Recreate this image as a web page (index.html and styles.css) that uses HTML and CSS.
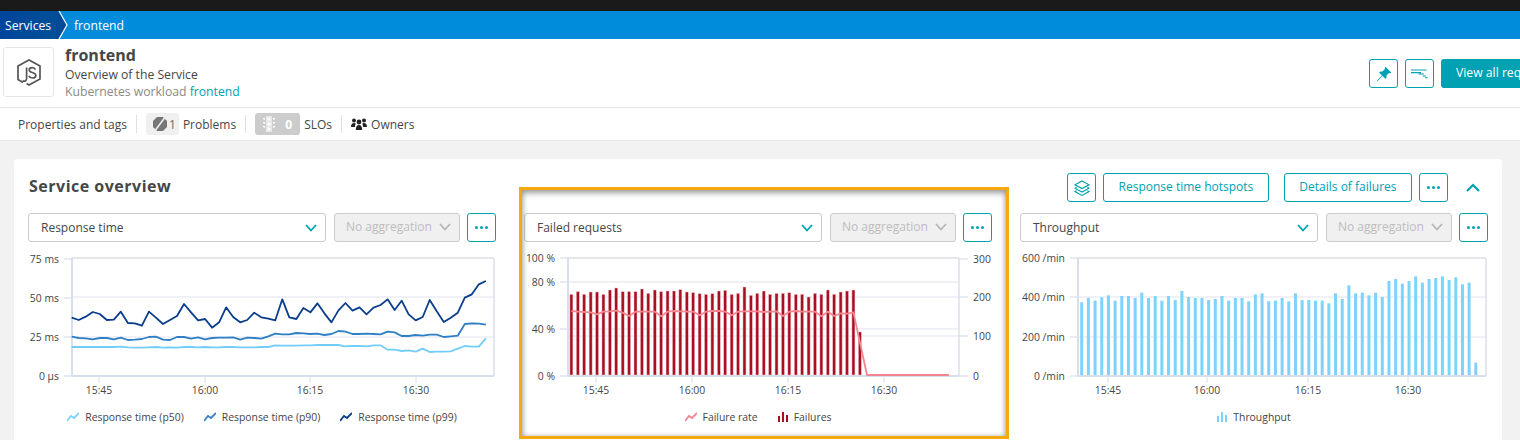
FILE: index.html
```html
<!DOCTYPE html>
<html lang="en">
<head>
    <meta charset="UTF-8">
    <meta name="viewport" content="width=device-width, initial-scale=1.0">
    <title>frontend - Overview of the Service</title>
    <link rel="stylesheet" href="styles.css">
</head>
<body>
    <div class="topbar"></div>
    <div class="breadcrumb">
        <a class="crumb-root">Services</a>
        <svg class="crumb-arrow" width="13" height="28" viewBox="0 0 13 28"><path d="M0 0H3L11 14L3 28H0Z" fill="#004a97"/><path d="M3 0L11 14L3 28" fill="none" stroke="#fff" stroke-width="1.2"/></svg>
        <a class="crumb-item">frontend</a>
    </div>

    <div class="header">
        <div class="tech-icon">
            <svg width="24" height="27" viewBox="0 0 24 27" fill="none" stroke="#555" stroke-width="1.7"><path d="M6 23.4L1 20.4V7L12 1L23 7V20L12 26L9.6 24.6"/><path d="M9.6 8.5V19.6C9.6 21.8 7.6 22.8 5.6 21.8"/><path d="M18.4 10.6C17.8 9.2 16.6 8.6 15.2 8.6C13.4 8.6 12.2 9.6 12.2 11C12.2 14.2 18.8 12.8 18.8 16.4C18.8 18 17.4 19 15.4 19C13.6 19 12.4 18.2 11.8 16.8"/></svg>
        </div>
        <div class="header-info">
            <h1>frontend</h1>
            <div class="header-sub">Overview of the Service</div>
            <div class="header-meta">Kubernetes workload <a>frontend</a></div>
        </div>
        <div class="header-actions">
            <div class="icon-button">
                <svg width="16" height="16" viewBox="0 0 16 16" fill="#00a1b2"><path d="M9.6 0.8L15.2 6.4L14 7.4L13 7L10.4 9.6C10.8 11 10.4 12.2 9.6 13L6.6 10L1 15.4L0.6 15L6 9.4L3 6.4C3.8 5.6 5 5.2 6.4 5.6L9 3L8.6 2Z"/></svg>
            </div>
            <div class="icon-button">
                <svg width="17" height="10" viewBox="0 0 17 10" fill="#00a1b2"><path d="M0 0.6H15.6V1.6H0ZM0 3H10V4.2H0ZM7.6 4.6H13V5.6H7.6ZM11.6 6.4H15V7.4H11.6ZM14 8.2H16.6V9.2H14Z"/></svg>
            </div>
            <div class="primary-button">View all requests</div>
        </div>
    </div>

    <div class="props">
        <span class="props-item">Properties and tags</span>
        <span class="props-sep"></span>
        <span class="chip chip-problems">
            <svg width="14" height="14" viewBox="0 0 14 14"><path d="M4 0H10L14 4V10L10 14H4L0 10V4Z" fill="#777"/><path d="M11.5 1L2.5 13" stroke="#f0f0f0" stroke-width="1.6"/></svg>
            <span>1</span>
        </span>
        <span class="props-item">Problems</span>
        <span class="props-sep"></span>
        <span class="chip chip-slo">
            <svg width="14" height="16" viewBox="0 0 14 16" fill="#fff"><path d="M4 0H10V16H4Z" opacity=".55"/><path d="M1 2H3V4L1 3ZM11 2H13V3L11 4ZM1 6H3V8L1 7ZM11 6H13V7L11 8ZM1 10H3V12L1 11ZM11 10H13V11L11 12Z"/><circle cx="7" cy="3" r="1.6"/><circle cx="7" cy="8" r="1.6"/><circle cx="7" cy="13" r="1.6"/></svg>
            <span>0</span>
        </span>
        <span class="props-item">SLOs</span>
        <span class="props-sep"></span>
        <svg class="owners-icon" width="16" height="12" viewBox="0 0 16 12" fill="#222"><circle cx="3" cy="2.6" r="2"/><circle cx="13" cy="2.6" r="2"/><circle cx="8" cy="4" r="2.4"/><path d="M0 9C0 6.5 1.2 5 3 5C3.8 5 4.4 5.3 4.8 5.8C4.2 6.6 4 7.6 4 9ZM16 9C16 6.5 14.8 5 13 5C12.2 5 11.6 5.3 11.2 5.8C11.8 6.6 12 7.6 12 9ZM4.8 12C4.8 8.6 6 7 8 7C10 7 11.2 8.6 11.2 12Z"/></svg>
        <span class="props-item">Owners</span>
    </div>

    <div class="card">
        <div class="card-head">
            <h2>Service overview</h2>
            <div class="card-actions">
                <div class="icon-button">
                    <svg width="16" height="16" viewBox="0 0 16 16" fill="none" stroke="#00a1b2" stroke-width="1.1"><path d="M8 1L15 4.8L8 8.6L1 4.8Z"/><path d="M2.6 7.2L1 8.2L8 12L15 8.2L13.4 7.2"/><path d="M2.6 10.6L1 11.6L8 15.4L15 11.6L13.4 10.6"/></svg>
                </div>
                <div class="text-button">Response time hotspots</div>
                <div class="text-button details-button">Details of failures</div>
                <div class="icon-button"><span class="dots"><i></i><i></i><i></i></span></div>
                <svg class="collapse" width="14" height="9" viewBox="0 0 14 9" fill="none" stroke="#00a1b2" stroke-width="2.2"><path d="M1 8L7 2L13 8"/></svg>
            </div>
        </div>

        <div class="columns">
            <div class="column">
                <div class="controls">
                    <div class="select"><span>Response time</span><svg class="caret" width="12" height="8" viewBox="0 0 12 8" fill="none" stroke="#00a1b2" stroke-width="1.8"><path d="M1 1L6 6.5L11 1"/></svg></div>
                    <div class="select select-off"><span>No aggregation</span><svg class="caret" width="12" height="8" viewBox="0 0 12 8" fill="none" stroke="#b4b4b4" stroke-width="1.6"><path d="M1 1L6 6.5L11 1"/></svg></div>
                    <div class="icon-button"><span class="dots"><i></i><i></i><i></i></span></div>
                </div>
                <svg class="chart" id="chartResponse" viewBox="28 250 468 150"></svg>
                <div class="legend">
                    <span class="legend-item"><svg width="12" height="10" viewBox="0 0 12 10" fill="none" stroke="#7dd3fc" stroke-width="1.8"><path d="M0 9L4 4L7 6L12 1"/></svg>Response time (p50)</span>
                    <span class="legend-item"><svg width="12" height="10" viewBox="0 0 12 10" fill="none" stroke="#3b82c4" stroke-width="1.8"><path d="M0 9L4 4L7 6L12 1"/></svg>Response time (p90)</span>
                    <span class="legend-item"><svg width="12" height="10" viewBox="0 0 12 10" fill="none" stroke="#0a3d8a" stroke-width="1.8"><path d="M0 9L4 4L7 6L12 1"/></svg>Response time (p99)</span>
                </div>
            </div>

            <div class="column">
                <div class="controls">
                    <div class="select"><span>Failed requests</span><svg class="caret" width="12" height="8" viewBox="0 0 12 8" fill="none" stroke="#00a1b2" stroke-width="1.8"><path d="M1 1L6 6.5L11 1"/></svg></div>
                    <div class="select select-off"><span>No aggregation</span><svg class="caret" width="12" height="8" viewBox="0 0 12 8" fill="none" stroke="#b4b4b4" stroke-width="1.6"><path d="M1 1L6 6.5L11 1"/></svg></div>
                    <div class="icon-button"><span class="dots"><i></i><i></i><i></i></span></div>
                </div>
                <svg class="chart" id="chartFailed" viewBox="524 250 468 150"></svg>
                <div class="legend">
                    <span class="legend-item"><svg width="12" height="10" viewBox="0 0 12 10" fill="none" stroke="#f5868f" stroke-width="1.8"><path d="M0 9L4 4L7 6L12 1"/></svg>Failure rate</span>
                    <span class="legend-item"><svg width="10" height="10" viewBox="0 0 10 10" fill="#a80f22"><path d="M0 4H2V10H0ZM4 0H6V10H4ZM8 3H10V10H8Z"/></svg>Failures</span>
                </div>
                <div class="highlight"></div>
            </div>

            <div class="column">
                <div class="controls">
                    <div class="select"><span>Throughput</span><svg class="caret" width="12" height="8" viewBox="0 0 12 8" fill="none" stroke="#00a1b2" stroke-width="1.8"><path d="M1 1L6 6.5L11 1"/></svg></div>
                    <div class="select select-off"><span>No aggregation</span><svg class="caret" width="12" height="8" viewBox="0 0 12 8" fill="none" stroke="#b4b4b4" stroke-width="1.6"><path d="M1 1L6 6.5L11 1"/></svg></div>
                    <div class="icon-button"><span class="dots"><i></i><i></i><i></i></span></div>
                </div>
                <svg class="chart" id="chartThroughput" viewBox="1020 250 468 150"></svg>
                <div class="legend">
                    <span class="legend-item"><svg width="10" height="10" viewBox="0 0 10 10" fill="#7dd3fc"><path d="M0 4H2V10H0ZM4 0H6V10H4ZM8 3H10V10H8Z"/></svg>Throughput</span>
                </div>
            </div>
        </div>
    </div>

    <script src="charts.js"></script>
</body>
</html>
```

FILE: styles.css
```css
* {
    box-sizing: border-box;
}
html, body {
    height: 440px;
    overflow: hidden;
}
body {
    margin: 0;
    background-color: #f2f2f2;
    color: #454646;
    font-family: "Open Sans", "Noto Sans", sans-serif;
    font-size: 12.2px;
}
.topbar {
    height: 11px;
    background-color: #1a1a1a;
}
.breadcrumb {
    display: flex;
    align-items: center;
    height: 28px;
    background-color: #008cdb;
    color: #fff;
}
.crumb-root {
    display: flex;
    align-items: center;
    height: 28px;
    width: 56px;
    padding-left: 5px;
    background: linear-gradient(90deg, #00459b, #004f98);
}
.crumb-arrow {
    display: block;
}
.crumb-item {
    margin-left: 5px;
}
.header {
    display: flex;
    align-items: flex-start;
    height: 69px;
    padding: 8px 0 0 3px;
    background-color: #fff;
    border-bottom: 1px solid #e6e6e6;
}
.tech-icon {
    display: flex;
    align-items: center;
    justify-content: center;
    flex: none;
    width: 51px;
    height: 50px;
    border: 1px solid #e6e6e6;
    border-radius: 3px;
}
.header-info {
    margin-left: 11px;
    flex: 1;
}
.header-info h1 {
    margin: -2px 0 0;
    font-size: 16px;
    line-height: 21px;
    font-weight: 700;
}
.header-sub {
    line-height: 17px;
}
.header-meta {
    line-height: 17px;
    color: #898989;
}
.header-meta a {
    color: #00a1b2;
}
.header-actions {
    display: flex;
    gap: 7px;
    flex: none;
    margin: 12px -50px 0 0;
}
.icon-button {
    display: flex;
    align-items: center;
    justify-content: center;
    flex: none;
    width: 29px;
    height: 29px;
    background-color: #fff;
    border: 1px solid #00a1b2;
    border-radius: 3px;
}
.primary-button {
    width: 129px;
    height: 29px;
    padding-left: 15px;
    line-height: 27px;
    color: #fff;
    background-color: #00a1b2;
    border-radius: 3px;
    white-space: nowrap;
}
.props {
    display: flex;
    align-items: center;
    height: 33px;
    padding-left: 18px;
    font-size: 12px;
    background-color: #fff;
    border-bottom: 1px solid #e6e6e6;
}
.props-sep {
    width: 1px;
    height: 18px;
    margin: 0 9px;
    background-color: #e0e0e0;
}
.chip {
    display: flex;
    align-items: center;
    height: 22px;
    margin-right: 4px;
    border-radius: 3px;
}
.chip-problems {
    width: 33px;
    padding-left: 7px;
    gap: 2px;
    background-color: #f0f0f0;
    color: #6b6b6b;
}
.chip-slo {
    width: 45px;
    padding-left: 7px;
    background-color: #cccccc;
    color: #fff;
    font-weight: 700;
}
.chip-slo span {
    margin-left: 9px;
}
.owners-icon {
    margin: 0 4px 0 0;
}
.card {
    margin: 18px 18px 0 14px;
    height: 320px;
    padding: 14px 14px 0;
    background-color: #fff;
    border-radius: 3px;
}
.card-head {
    display: flex;
    align-items: center;
    justify-content: space-between;
    height: 29px;
}
.card-head h2 {
    margin: -4px 0 0 1px;
    font-size: 16px;
    font-weight: 700;
    letter-spacing: 0.5px;
}
.card-actions {
    display: flex;
    align-items: center;
    gap: 7px;
    margin-right: 8px;
}
.text-button {
    height: 29px;
    padding: 0 14.5px;
    font-size: 12px;
    line-height: 26px;
    color: #00a1b2;
    background-color: #fff;
    border: 1px solid #00a1b2;
    border-radius: 3px;
}
.details-button {
    margin-left: 8px;
}
.collapse {
    margin: 0 0 0 11px;
}
.dots {
    display: flex;
    gap: 2px;
}
.dots i {
    width: 3px;
    height: 3px;
    border-radius: 50%;
    background-color: #00a1b2;
}
.columns {
    display: grid;
    grid-template-columns: repeat(3, 468px);
    gap: 28px;
    margin-top: 11px;
}
.column {
    position: relative;
}
.controls {
    display: flex;
    gap: 8px;
}
.controls .icon-button {
    margin-left: -1px;
}
.select {
    display: flex;
    align-items: center;
    justify-content: space-between;
    flex: none;
    width: 298px;
    height: 29px;
    padding: 0 8px 0 12px;
    font-size: 12px;
    background-color: #fff;
    border: 1px solid #cccccc;
    border-radius: 3px;
}
.select-off {
    width: 126px;
    padding: 0 8px 2px 11px;
    color: #bdbdbd;
    background-color: #f0f0f0;
}
.chart {
    display: block;
    width: 468px;
    height: 150px;
    margin-top: 8px;
}
.chart text {
    font-size: 10.4px;
    fill: #454646;
}
.legend {
    display: flex;
    justify-content: center;
    gap: 20px;
    margin-top: 10px;
    font-size: 10.4px;
    line-height: 14px;
}
.legend-item {
    display: flex;
    align-items: center;
    gap: 6px;
}
.highlight {
    position: absolute;
    top: -26px;
    left: -5px;
    width: 490px;
    height: 252px;
    border: 3px solid #f5a80f;
    box-shadow: inset 0 3px 6px rgba(0, 0, 0, 0.35), inset 0 0 5px rgba(0, 0, 0, 0.2);
    pointer-events: none;
}
```

FILE: charts.js
```js
// draws the three service overview charts
let svgNs = 'http://www.w3.org/2000/svg';

function el(parent, name, attrs, text) {
    let node = document.createElementNS(svgNs, name);
    for (let key in attrs) {
        node.setAttribute(key, attrs[key]);
    }
    if (text) node.textContent = text;
    parent.appendChild(node);
    return node;
}

function frame(svg, box, grid, leftLabels, ticks) {
    let axis = '#d8deec';
    let line = '#ebedf3';
    grid.forEach(function (y) {
        el(svg, 'line', { x1: box.left, x2: box.right, y1: y, y2: y, stroke: line, 'stroke-width': 1.4 });
    });
    el(svg, 'line', { x1: box.left, x2: box.right, y1: box.top, y2: box.top, stroke: '#e4e6ec', 'stroke-width': 1.8 });
    el(svg, 'line', { x1: box.right, x2: box.right, y1: box.top, y2: box.bottom, stroke: '#e2e5ee', 'stroke-width': 1.8 });
    el(svg, 'line', { x1: box.left, x2: box.left, y1: box.top, y2: box.bottom, stroke: axis, 'stroke-width': 2 });
    el(svg, 'line', { x1: box.left, x2: box.right, y1: box.bottom, y2: box.bottom, stroke: axis, 'stroke-width': 2 });
    leftLabels.forEach(function (label) {
        el(svg, 'line', { x1: box.left - 8, x2: box.left, y1: label[1], y2: label[1], stroke: axis, 'stroke-width': 1.2 });
        el(svg, 'text', { x: box.left - 13, y: label[1] + 3.5, 'text-anchor': 'end' }, label[0]);
    });
    ticks.forEach(function (tick) {
        el(svg, 'line', { x1: tick[1], x2: tick[1], y1: box.bottom, y2: box.bottom + 7, stroke: axis, 'stroke-width': 1 });
        el(svg, 'text', { x: tick[1], y: box.bottom + 18, 'text-anchor': 'middle' }, tick[0]);
    });
}

function polyline(svg, points, color, width) {
    let attr = points.map(function (p) { return p[0] + ',' + p[1]; }).join(' ');
    el(svg, 'polyline', { points: attr, fill: 'none', stroke: color, 'stroke-width': width, 'stroke-linejoin': 'round' });
}

// series values were read off at 3x, so a value of v is offset + v / 3 on the page
function series(values, startX, stepX, offset) {
    return values.map(function (v, i) { return [startX + i * stepX, offset + v / 3]; });
}

// Response time
let p99 = [143,150,140,126,132,150,149,125,159,160,167,125,143,162,150,138,102,127,151,147,173,157,112,141,157,150,128,142,146,151,88,142,147,114,127,100,130,157,121,99,122,112,133,113,105,88,120,92,133,151,141,90,124,156,143,128,83,73,43,33];
let p90 = [200,204,205,208,204,204,208,203,210,209,207,201,200,209,210,201,201,206,202,208,204,203,203,202,209,203,204,206,199,191,193,193,189,190,192,191,195,192,183,185,192,192,191,192,193,185,187,198,198,195,197,194,194,201,199,197,162,160,161,164];
let p50 = [231,231,231,231,231,231,231,230,232,233,233,232,231,233,232,233,231,231,232,231,232,232,231,231,232,232,232,231,231,226,227,227,227,226,226,225,225,225,225,229,228,228,229,226,226,239,239,243,241,245,236,246,245,245,244,236,228,230,230,205];

let response = document.getElementById('chartResponse');
frame(response, { left: 72, right: 494, top: 258, bottom: 376 }, [297, 337],
    [['75 ms', 259], ['50 ms', 298], ['25 ms', 337], ['0 µs', 376]],
    [['15:45', 99], ['16:00', 205], ['16:15', 310], ['16:30', 416]]);
polyline(response, series(p50, 71.7, 7.02, 270), '#73cdfa', 1.8);
polyline(response, series(p90, 71.7, 7.02, 270), '#2f7fc4', 1.8);
polyline(response, series(p99, 71.7, 7.02, 270), '#0a3d8a', 1.8);

// Failed requests
let failures = [43,35,43,36,36,43,30,24,35,35,35,27,40,30,35,33,33,29,36,38,41,43,41,33,31,43,40,21,46,40,33,43,40,40,38,43,43,51,40,43,30,43,36,33,30,156];
let rate = [93,95,96,97,103,95,94,92,98,108,95,95,95,95,109,95,93,94,95,95,106,95,93,93,95,106,95,94,94,94,96,95,94,108,95,93,95,95,95,109,95,108,100,101,97];

let failed = document.getElementById('chartFailed');
frame(failed, { left: 568, right: 959, top: 258, bottom: 376 }, [282, 297, 329, 336],
    [['100 %', 258], ['80 %', 282], ['40 %', 329], ['0 %', 376]],
    [['15:45', 596], ['16:00', 692], ['16:15', 788], ['16:30', 884]]);
[['300', 259], ['200', 297], ['100', 336], ['0', 376]].forEach(function (label) {
    el(failed, 'line', { x1: 959, x2: 968, y1: label[1], y2: label[1], stroke: '#d8deec', 'stroke-width': 1.2 });
    el(failed, 'text', { x: 973, y: label[1] + 3.5 }, label[0]);
});
failures.forEach(function (top, i) {
    let y = 280 + top / 3;
    el(failed, 'rect', { x: 571.4 + i * 6.41 - 1.5, y: y, width: 3, height: 375 - y, fill: '#a80f22', stroke: '#efc4c9', 'stroke-width': 0.5 });
});
let ratePoints = series(rate, 571.4, 6.41, 280);
ratePoints.push([867, 375], [949, 375]);
polyline(failed, ratePoints, '#f5868f', 1.8);

// Throughput
let throughput = [307,294,302,292,286,302,288,288,294,278,294,288,302,288,300,273,291,294,294,300,297,288,302,294,294,304,283,280,304,302,294,304,280,300,300,302,302,310,280,297,256,280,278,286,278,291,243,237,251,243,229,248,237,234,229,240,232,253,248,488];

let through = document.getElementById('chartThroughput');
frame(through, { left: 1078, right: 1486, top: 258, bottom: 376 }, [297, 337],
    [['600 /min', 258], ['400 /min', 297], ['200 /min', 337], ['0 /min', 376]],
    [['15:45', 1108], ['16:00', 1207], ['16:15', 1308], ['16:30', 1408]]);
throughput.forEach(function (top, i) {
    let y = 200 + top / 3;
    el(through, 'rect', { x: 1080.2 + i * 6.68, y: y, width: 3, height: 375 - y, fill: '#7dd3fc' });
});
```
